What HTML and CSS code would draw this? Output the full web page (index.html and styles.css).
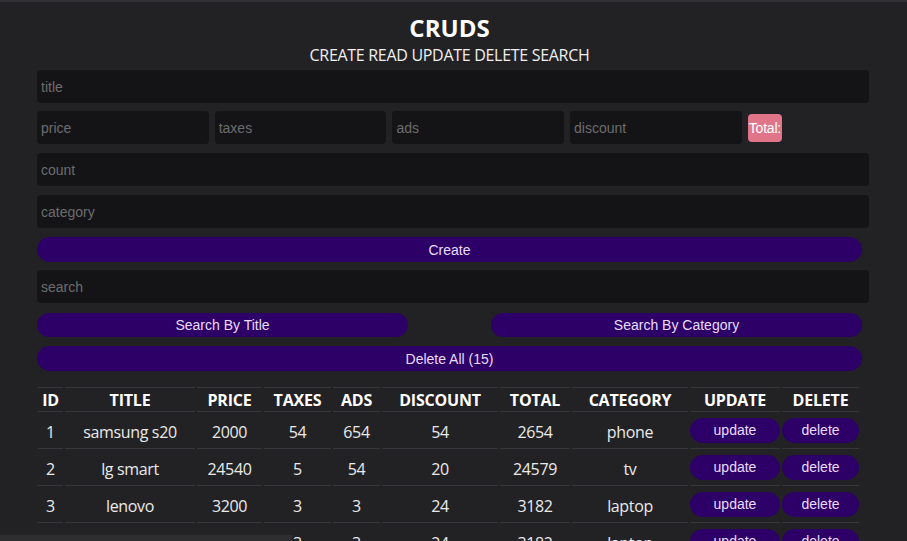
FILE: index.html
```html
<!DOCTYPE html>
<html lang="en">
<head>
<meta charset="utf-8">
<title>CRUDS</title>
<link rel="stylesheet" href="styles.css">
</head>
<body>
<div class="crud">
  <div class="head">
    <h2>CRUDS</h2>
    <p>CREATE READ UPDATE DELETE SEARCH</p>
  </div>
  <div class="inputs">
    <input class="field first" type="text" placeholder="title">
    <div class="price">
      <input class="field small" type="number" placeholder="price">
      <input class="field small" type="number" placeholder="taxes">
      <input class="field small" type="number" placeholder="ads">
      <input class="field small" type="number" placeholder="discount">
      <small class="total">Total:</small>
    </div>
    <input class="field" type="number" placeholder="count">
    <input class="field" type="text" placeholder="category">
    <button class="btn create">Create</button>
  </div>
  <div class="output">
    <div class="search-block">
      <input class="field" type="text" placeholder="search">
      <div class="btn-search">
        <button class="btn half">Search By Title</button>
        <button class="btn half">Search By Category</button>
      </div>
    </div>
    <div class="delete-all">
      <button class="btn">Delete All (15)</button>
    </div>
    <table class="data">
      <colgroup>
        <col class="c-id"><col class="c-title"><col class="c-price"><col class="c-taxes"><col class="c-ads"><col class="c-disc"><col class="c-total"><col class="c-cat"><col class="c-upd"><col class="c-del">
      </colgroup>
      <thead>
        <tr><th>ID</th><th>TITLE</th><th>PRICE</th><th>TAXES</th><th>ADS</th><th>DISCOUNT</th><th>TOTAL</th><th>CATEGORY</th><th>UPDATE</th><th>DELETE</th></tr>
      </thead>
      <tbody>
        <tr><td>1</td><td>samsung s20</td><td>2000</td><td>54</td><td>654</td><td>54</td><td>2654</td><td>phone</td><td class="act"><button class="btn row-btn">update</button></td><td class="act"><button class="btn row-btn">delete</button></td></tr>
        <tr><td>2</td><td>lg smart</td><td>24540</td><td>5</td><td>54</td><td>20</td><td>24579</td><td>tv</td><td class="act"><button class="btn row-btn">update</button></td><td class="act"><button class="btn row-btn">delete</button></td></tr>
        <tr><td>3</td><td>lenovo</td><td>3200</td><td>3</td><td>3</td><td>24</td><td>3182</td><td>laptop</td><td class="act"><button class="btn row-btn">update</button></td><td class="act"><button class="btn row-btn">delete</button></td></tr>
        <tr><td>4</td><td>lenovo</td><td>3200</td><td>3</td><td>3</td><td>24</td><td>3182</td><td>laptop</td><td class="act"><button class="btn row-btn">update</button></td><td class="act"><button class="btn row-btn">delete</button></td></tr>
      </tbody>
    </table>
  </div>
</div>
<div class="hscroll"></div>
</body>
</html>
```
FILE: styles.css
```css
html {
  overflow: hidden;
  background: #222124;
  border-top: 2px solid #313034;
}
body {
  margin: 0;
  background: #222124;
  color: #f2f2f2;
  font-family: "Open Sans", "Noto Sans", sans-serif;
}
.crud {
  width: 825px;
  margin-left: 37px;
  padding-top: 10px;
}
.head {
  text-align: center;
}
.head h2 {
  margin: 0;
  font-size: 24px;
  line-height: 32px;
  font-weight: 700;
  color: #ffffff;
}
.head p {
  margin: 0;
  font-size: 16px;
  line-height: 22px;
  letter-spacing: -0.3px;
  color: #f0f0f0;
}
.inputs {
  margin-top: 4px;
}
.field {
  display: block;
  box-sizing: border-box;
  width: 832px;
  height: 33px;
  margin: 0 0 9px;
  padding: 4px;
  border: none;
  outline: none;
  border-radius: 4px;
  background: #141416;
  color: #fff;
  font-family: "Liberation Sans", Arial, sans-serif;
  font-size: 14px;
}
.field.first {
  margin-bottom: 8px;
}
.field::placeholder {
  color: #6c6c6e;
}
.price {
  display: flex;
  align-items: center;
  gap: 6px;
  margin-bottom: 9px;
}
.field.small {
  width: 171.7px;
  margin: 0;
}
.total {
  display: inline-block;
  padding: 5px 1px;
  line-height: 18px;
  background: #e0758a;
  border-radius: 4px;
  color: #fff;
  font-family: "Liberation Sans", Arial, sans-serif;
  font-size: 14px;
  letter-spacing: -0.2px;
}
.btn {
  display: block;
  width: 100%;
  height: 25px;
  border: none;
  border-radius: 20px;
  background: #2c0067;
  color: #e9ddff;
  font-family: "Liberation Sans", Arial, sans-serif;
  font-size: 14px;
  padding: 0;
  cursor: pointer;
  margin: 0 0 9px;
}
.btn.create {
  margin-bottom: 8px;
}
.search-block .field {
  margin-bottom: 10px;
}
.btn-search {
  display: flex;
  justify-content: space-between;
}
.btn.half {
  width: 371px;
  height: 24px;
}
.delete-all .btn {
  margin-bottom: 16px;
}
.data {
  width: 825px;
  border-collapse: separate;
  border-spacing: 2px 0;
  margin-left: -1px;
  color: #eaeaea;
}
.c-id { width: 25px; }
.c-title { width: 130px; }
.c-price { width: 65px; }
.c-taxes { width: 67px; }
.c-ads { width: 47px; }
.c-disc { width: 116px; }
.c-total { width: 70px; }
.c-cat { width: 116px; }
.c-upd { width: 90px; }
.c-del { width: 77px; }
.data th {
  height: 23px;
  padding: 0;
  font-size: 16px;
  font-weight: 700;
  letter-spacing: -0.2px;
  color: #ffffff;
  text-align: center;
  border-top: 1px solid #38373b;
  border-bottom: 1px solid #38373b;
}
.data td {
  height: 32px;
  padding: 4px 0 0;
  font-size: 16px;
  letter-spacing: -0.35px;
  text-align: center;
  border-bottom: 1px solid #38373b;
}
.data td.act {
  padding: 0;
}
.btn.row-btn {
  margin: 0;
  letter-spacing: 0;
}
.hscroll {
  position: fixed;
  left: 0;
  bottom: 0;
  width: 292px;
  height: 6px;
  background: #2e2d30;
}
```
